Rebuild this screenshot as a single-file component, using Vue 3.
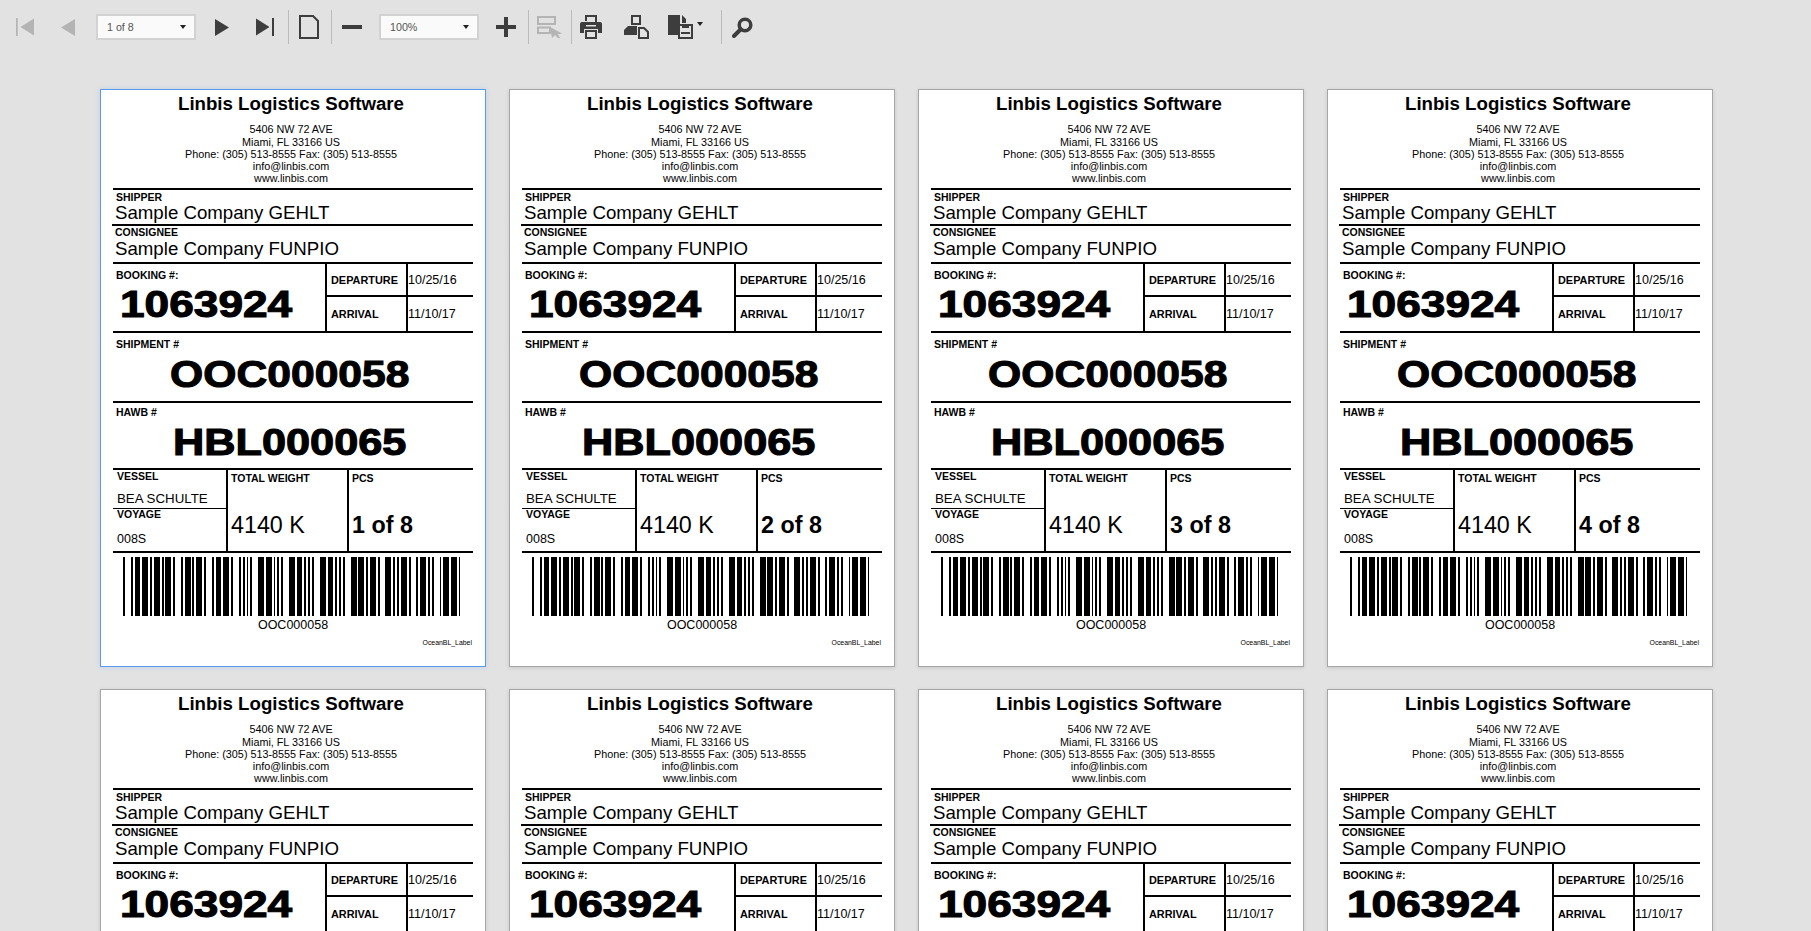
<script setup>
import { computed } from 'vue'

const total = 8
const pages = Array.from({ length: total }, (_, i) => i + 1)

// code 39 patterns, 1 = wide element
const CODE39 = {
  '*': '010010100',
  '0': '000110100',
  '5': '100110000',
  '8': '100100100',
  C: '101001000',
  O: '100010010',
}

const NARROW = 1.93
const WIDE = 5.79

const bars = computed(() => {
  const out = []
  let x = 0
  for (const ch of '*OOC000058*') {
    const pattern = CODE39[ch]
    for (let i = 0; i < pattern.length; i++) {
      const w = pattern[i] === '1' ? WIDE : NARROW
      if (i % 2 === 0) out.push({ x, w })
      x += w
    }
    x += NARROW
  }
  return out
})
</script>

<template>
  <div class="viewer">
    <div class="toolbar">
      <button class="tb-btn w42 off">
        <svg width="18" height="18" viewBox="0 0 18 18"><rect x="0" y="0" width="1.7" height="18" /><path d="M18 .5V17.5L4.5 9Z" /></svg>
      </button>
      <button class="tb-btn w42 off">
        <svg width="14" height="17" viewBox="0 0 14 17"><path d="M14 0V17L0 8.5Z" /></svg>
      </button>
      <div class="tb-select ml6"><span>1 of 8</span><i class="caret" /></div>
      <button class="tb-btn w42 ml4">
        <svg width="14" height="17" viewBox="0 0 14 17"><path d="M0 0V17L14 8.5Z" /></svg>
      </button>
      <button class="tb-btn w42">
        <svg width="18" height="18" viewBox="0 0 18 18"><path d="M0 .5V17.5L13.5 9Z" /><rect x="16" y="0" width="2" height="18" /></svg>
      </button>
      <span class="tb-sep ml1" />
      <button class="tb-btn w38">
        <svg width="20" height="24" viewBox="0 0 20 24"><path d="M1 1H14L19 6V23H1Z" fill="none" stroke="#3d3d3d" stroke-width="2" /></svg>
      </button>
      <span class="tb-sep ml2" />
      <button class="tb-btn w38">
        <svg width="20" height="4" viewBox="0 0 20 4"><rect width="20" height="4" /></svg>
      </button>
      <div class="tb-select ml7"><span>100%</span><i class="caret" /></div>
      <button class="tb-btn w38 ml7">
        <svg width="20" height="20" viewBox="0 0 20 20"><path d="M8 0H12V8H20V12H12V20H8V12H0V8H8Z" /></svg>
      </button>
      <span class="tb-sep ml2" />
      <button class="tb-btn w38 off">
        <svg width="25" height="22" viewBox="0 0 25 22"><path d="M1 1H18V8H1ZM1 11.500H13V17H1Z" fill="none" stroke="#b4b4b4" stroke-width="2" /><path d="M13 11L25 17.500L20.500 18.500L23.500 22H21L18 19L15 22Z" /></svg>
      </button>
      <span class="tb-sep ml2" />
      <button class="tb-btn w36">
        <svg width="22" height="24" viewBox="0 0 22 24">
          <path d="M6 6V1H16V7" fill="none" stroke="#3d3d3d" stroke-width="2" />
          <path d="M2 7H20Q22 7 22 9V18H18V14H4V18H0V9Q0 7 2 7Z" />
          <path d="M6 16H16V23H6Z" fill="none" stroke="#3d3d3d" stroke-width="2" />
          <rect x="6" y="10" width="10" height="1.500" fill="#e2e2e2" />
        </svg>
      </button>
      <button class="tb-btn w36 ml8">
        <svg width="25" height="24" viewBox="0 0 25 24">
          <path d="M8 1H16V9H8Z" fill="none" stroke="#3d3d3d" stroke-width="2" />
          <path d="M4 11H13V20H0V15Z" />
          <path d="M15 13H20L24 17V23H15Z" fill="none" stroke="#3d3d3d" stroke-width="2" />
        </svg>
      </button>
      <button class="tb-btn save-btn">
        <svg width="25" height="24" viewBox="0 0 25 24">
          <path d="M0 0H12V9H10V20H0Z" />
          <path d="M14 0L18 4V8H14Z" />
          <path d="M11 10H24V23H11Z" fill="none" stroke="#3d3d3d" stroke-width="2" />
          <rect x="13" y="17" width="9" height="2" />
          <rect x="14" y="10" width="7" height="3" />
        </svg>
        <i class="caret dark" />
      </button>
      <span class="tb-sep save-sep" />
      <button class="tb-btn w36 ml1">
        <svg width="21" height="21" viewBox="0 0 21 21">
          <circle cx="13" cy="8" r="5.800" fill="none" stroke="#3d3d3d" stroke-width="3.500" />
          <path d="M8.500 12.500L2 19" fill="none" stroke="#3d3d3d" stroke-width="4" stroke-linecap="round" />
        </svg>
      </button>
    </div>

    <div class="pages">
      <div v-for="n in pages" :key="n" class="page" :class="{ selected: n === 1 }">
        <div class="head">
          <div class="company">Linbis Logistics Software</div>
          <div class="addr first">5406 NW 72 AVE</div>
          <div class="addr tall">Miami, FL 33166 US</div>
          <div class="addr">Phone: (305) 513-8555 Fax: (305) 513-8555</div>
          <div class="addr">info@linbis.com</div>
          <div class="addr">www.linbis.com</div>
        </div>

        <div class="block shipper">
          <div class="label">SHIPPER</div>
          <div class="party">Sample Company GEHLT</div>
        </div>
        <div class="block consignee">
          <div class="label">CONSIGNEE</div>
          <div class="party">Sample Company FUNPIO</div>
        </div>

        <div class="block booking">
          <div class="booking-left">
            <div class="label">BOOKING #:</div>
            <div class="big booking-no"><span>1063924</span></div>
          </div>
          <div class="dates">
            <div class="date-key">DEPARTURE</div>
            <div class="date-val">10/25/16</div>
            <div class="date-key low">ARRIVAL</div>
            <div class="date-val low">11/10/17</div>
          </div>
        </div>

        <div class="block shipment">
          <div class="label">SHIPMENT #</div>
          <div class="big centered shipment-no"><span>OOC000058</span></div>
        </div>
        <div class="block hawb">
          <div class="label">HAWB #</div>
          <div class="big centered hawb-no"><span>HBL000065</span></div>
        </div>

        <div class="block cargo">
          <div class="cargo-left">
            <div class="vessel">
              <div class="label">VESSEL</div>
              <div class="vessel-name">BEA SCHULTE</div>
            </div>
            <div class="voyage">
              <div class="label">VOYAGE</div>
              <div class="voyage-no">008S</div>
            </div>
          </div>
          <div class="cargo-col">
            <div class="label">TOTAL WEIGHT</div>
            <div class="cargo-val">4140 K</div>
          </div>
          <div class="cargo-col">
            <div class="label">PCS</div>
            <div class="cargo-val bold">{{ n }} of {{ total }}</div>
          </div>
        </div>

        <div class="block code">
          <svg class="barcode" width="337" height="59" viewBox="0 0 337 59" shape-rendering="crispEdges">
            <rect v-for="(b, i) in bars" :key="i" :x="b.x" y="0" :width="b.w" height="59" />
          </svg>
          <div class="code-text">OOC000058</div>
          <div class="report-name">OceanBL_Label</div>
        </div>
      </div>
    </div>
  </div>
</template>

<style>
html, body {
  margin: 0;
  height: 100%;
  overflow: hidden;
  background: #e2e2e2;
}
</style>

<style scoped>
.viewer {
  width: 1811px;
  height: 931px;
  overflow: hidden;
  background: #e2e2e2;
  font-family: "Liberation Sans", Arial, sans-serif;
  color: #000;
}

/* Toolbar */
.toolbar {
  display: flex;
  align-items: center;
  gap: 1px;
  height: 54px;
  padding-left: 4px;
  box-sizing: border-box;
}

.tb-btn {
  display: flex;
  align-items: center;
  justify-content: center;
  flex-shrink: 0;
  height: 40px;
  padding: 0;
  border: 0;
  background: none;
  fill: #3d3d3d;
}

.tb-btn.off { fill: #b4b4b4; }
.w42 { width: 42px; }
.w38 { width: 38px; }
.w36 { width: 36px; }
.ml1 { margin-left: 1px; }
.ml2 { margin-left: 2px; }
.ml4 { margin-left: 4px; }
.ml6 { margin-left: 6px; }
.ml7 { margin-left: 7px; }
.ml8 { margin-left: 8px; }

.save-btn {
  width: 38px;
  margin-left: 13px;
  justify-content: flex-start;
  gap: 4px;
}

.save-sep { margin-left: 14px; }

.tb-sep {
  flex-shrink: 0;
  width: 1px;
  height: 34px;
  background: #bbb;
}

.tb-select {
  display: flex;
  align-items: center;
  justify-content: space-between;
  flex-shrink: 0;
  box-sizing: border-box;
  width: 100px;
  height: 26px;
  margin-bottom: 1px;
  padding: 0 8px 0 9px;
  border: 2px solid #d2d2d2;
  background: #fafafa;
  font-size: 10.7px;
  color: #555;
}

.caret {
  width: 0;
  height: 0;
  border-left: 3.500px solid transparent;
  border-right: 3.500px solid transparent;
  border-top: 4px solid #222;
}

.caret.dark { margin-top: -7px; }

/* Report pages */
.pages {
  display: grid;
  grid-template-columns: repeat(4, 386px);
  gap: 22px 23px;
  padding: 35px 0 0 100px;
}

.page {
  box-sizing: border-box;
  width: 386px;
  height: 578px;
  padding: 0 12px;
  overflow: hidden;
  border: 1px solid #a6a6a6;
  background: #fff;
  box-shadow: 0 1px 4px rgba(0, 0, 0, 0.12);
}

.page.selected {
  border-color: #5a9bf0;
  box-shadow: 0 0 5px rgba(90, 155, 240, 0.25);
}

.head {
  box-sizing: border-box;
  height: 98px;
  padding-right: 4px;
  text-align: center;
}

.company {
  padding-top: 3px;
  font-size: 18.67px;
  line-height: 22px;
  font-weight: bold;
}

.addr {
  font-size: 10.8px;
  line-height: 12px;
}

.addr.first { margin-top: 8px; }
.addr.tall { margin-top: 1px; }

.block {
  box-sizing: border-box;
  border-top: 2px solid #000;
}

.label {
  padding-left: 3px;
  font-size: 10.5px;
  line-height: 12px;
  font-weight: bold;
}

.party {
  padding-left: 2px;
  font-size: 18.67px;
  line-height: 20px;
}

.shipper { height: 36px; padding-top: 1px; }

.consignee {
  height: 38px;
  margin-left: -1px;
}

.consignee .party { margin-top: 1px; padding-left: 3px; }

.booking {
  display: grid;
  grid-template-columns: 212px 1fr;
  height: 69px;
}

.booking-left { padding-top: 5px; }

.big {
  font-size: 37.33px;
  line-height: 46px;
  font-weight: bold;
  -webkit-text-stroke: 1.1px #000;
  white-space: nowrap;
}

.big span { display: inline-block; }

.booking-no { padding-left: 7px; }

.booking-no span {
  transform: scaleX(1.185);
  transform-origin: left center;
}

.centered {
  padding-right: 6px;
  text-align: center;
}

.shipment-no span { transform: scaleX(1.142); }
.hawb-no span { transform: scaleX(1.16); }

.dates {
  display: grid;
  grid-template-columns: 81px 1fr;
  grid-template-rows: 31px 1fr;
}

.date-key,
.date-val {
  display: flex;
  align-items: center;
}

.date-key {
  padding-left: 4px;
  border-left: 2px solid #000;
  font-size: 10.9px;
  font-weight: bold;
}

.date-val {
  border-left: 2px solid #000;
  font-size: 12.5px;
}

.low { border-top: 2px solid #000; }

.shipment { height: 70px; padding-top: 5px; }
.shipment .big { margin-top: 1px; }

.hawb { height: 67px; padding-top: 3px; }
.hawb .big { margin-top: 1px; }

.cargo {
  display: grid;
  grid-template-columns: 113px 121px 1fr;
  height: 83px;
}

.cargo-left { display: flex; flex-direction: column; }

.vessel {
  box-sizing: border-box;
  height: 39px;
  border-bottom: 1px solid #000;
}

.vessel .label,
.voyage .label { padding-left: 4px; }

.vessel-name,
.voyage-no {
  padding-left: 4px;
  line-height: 16px;
}

.vessel-name { margin-top: 9px; font-size: 13.3px; }
.voyage .label { margin-top: -1px; }
.voyage-no { margin-top: 11px; font-size: 12.5px; }

.cargo-col {
  padding: 2px 0 0 3px;
  border-left: 2px solid #000;
}

.cargo-col .label { padding-left: 0; }

.cargo-val {
  margin-top: 27px;
  font-size: 23.3px;
  line-height: 28px;
}

.cargo-val.bold { font-weight: bold; }

.code { padding-top: 4px; }

.barcode {
  display: block;
  margin-left: 10px;
}

.code-text {
  margin-top: 2px;
  font-size: 12.5px;
  line-height: 14px;
  text-align: center;
}

.report-name {
  margin-top: 7px;
  padding-right: 1px;
  font-size: 6.900px;
  line-height: 8px;
  text-align: right;
}
</style>
